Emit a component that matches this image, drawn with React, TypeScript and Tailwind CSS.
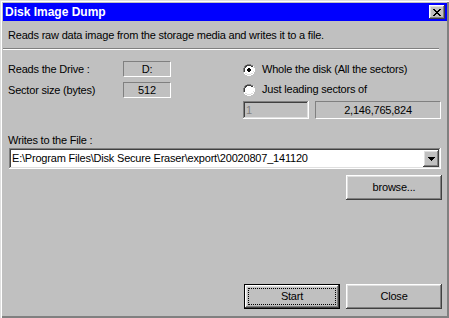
const FONT = "font-['Liberation_Sans',Arial,sans-serif]";

const raised =
  "shadow-[inset_-1px_-1px_#404040,inset_1px_1px_#ffffff,inset_-2px_-2px_#808080,inset_2px_2px_#dfdfdf]";
const sunken =
  "shadow-[inset_-1px_-1px_#ffffff,inset_1px_1px_#808080,inset_-2px_-2px_#dfdfdf,inset_2px_2px_#404040]";
const staticBox = "border border-t-[#808080] border-l-[#808080] border-r-white border-b-white";

function Radio({ checked }: { checked?: boolean }) {
  return (
    <svg width="12" height="12" viewBox="0 0 12 12" className="shrink-0">
      <path d="M4 0h4v1h2v1h1v2h1v4h-1v2h-1v1h-2v1h-4v-1h-2v-1h-1v-2h-1v-4h1v-2h1v-1h2z" fill="#ffffff" />
      <path d="M4 0h4v1h2v1h-2v-1h-4v1h-2v2h-1v4h-1v-4h1v-2h1v-1h2z" fill="#808080" />
      <path d="M4 1h4v1h2v1h-2v-1h-4v1h-1v1h-1v4h-1v-4h1v-2h1v-1h2z" fill="#404040" />
      <path d="M10 3h1v1h-1zM11 4v4h-1v2h-2v1h-4v-1h-2v-1h2v1h4v-1h2v-2h1v-4z" fill="#dfdfdf" />
      {checked && <path d="M5 4h2v1h1v2h-1v1h-2v-1h-1v-2h1z" fill="#000000" />}
    </svg>
  );
}

function Button({ label, primary, className = "" }: { label: string; primary?: boolean; className?: string }) {
  if (primary) {
    return (
      <div className={`border border-black bg-[#c0c0c0] ${className}`}>
        <div className={`h-full w-full p-[3px] ${raised}`}>
          <div className="flex h-full w-full items-center justify-center border border-dotted border-black">
            {label}
          </div>
        </div>
      </div>
    );
  }
  return (
    <div className={`flex items-center justify-center bg-[#c0c0c0] ${raised} ${className}`}>{label}</div>
  );
}

export default function App() {
  return (
    <div
      className={`${FONT} flex h-[318px] w-[449px] flex-col bg-[#c0c0c0] pl-[3px] pr-[2px] pt-[3px] text-[11px] leading-[13px] tracking-[-0.2px] text-black shadow-[inset_1px_1px_#dfdfdf,inset_2px_2px_#ffffff,inset_-2px_-2px_#808080]`}
    >
      {/* title bar */}
      <div className="flex h-[18px] items-center justify-between bg-[#0000ff] pl-[2px] pr-[2px]">
        <span className="text-[12px] font-bold tracking-normal text-white">Disk Image Dump</span>
        <div className={`flex h-[14px] w-[16px] items-center justify-center bg-[#c0c0c0] ${raised}`}>
          <svg width="8" height="7" viewBox="0 0 8 7">
            <path
              d="M0 0h2v1h1v1h2v-1h1v-1h2v1h-1v1h-1v1h-1v1h1v1h1v1h1v1h-2v-1h-1v-1h-2v1h-1v1h-2v-1h1v-1h1v-1h1v-1h-1v-1h-1v-1h-1z"
              fill="#000"
            />
          </svg>
        </div>
      </div>

      <div className="flex flex-1 flex-col">
        <div className="mt-[8px] pl-[5px]">Reads raw data image from the storage media and writes it to a file.</div>
        <div className="mt-[6px] h-[2px] w-[436px] border-t border-b border-t-[#808080] border-b-white" />

        <div className="mt-[11px] flex pl-[5px]">
          {/* left column */}
          <div className="flex w-[235px] flex-col gap-[5px]">
            <div className="flex items-center">
              <span className="w-[115px]">Reads the Drive :</span>
              <div className={`flex h-[16px] w-[48px] items-center justify-center ${staticBox}`}>D:</div>
            </div>
            <div className="flex items-center">
              <span className="w-[115px]">Sector size (bytes)</span>
              <div className={`flex h-[16px] w-[48px] items-center justify-center ${staticBox}`}>512</div>
            </div>
          </div>

          {/* right column */}
          <div className="flex flex-col">
            <div className="mt-[2px] flex h-[13px] items-center gap-[7px]">
              <Radio checked />
              <span>Whole the disk (All the sectors)</span>
            </div>
            <div className="mt-[7px] flex h-[13px] items-center gap-[7px]">
              <Radio />
              <span>Just leading sectors of</span>
            </div>
            <div className="mt-[5px] flex gap-[6px]">
              <div className={`flex h-[18px] w-[66px] items-center px-[3px] text-[#808080] ${sunken}`}>1</div>
              <div className={`flex h-[18px] w-[126px] items-center justify-center ${staticBox}`}>2,146,765,824</div>
            </div>
          </div>
        </div>

        <div className="mt-[15px] pl-[5px]">Writes to the File :</div>
        <div className={`ml-[6px] mt-[1px] flex h-[21px] w-[432px] items-center bg-white p-[2px] ${sunken}`}>
          <span className="flex-1 pl-[1px]">E:\Program Files\Disk Secure Eraser\export\20020807_141120</span>
          <div className={`flex h-[17px] w-[16px] items-center justify-center bg-[#c0c0c0] ${raised}`}>
            <svg width="7" height="4" viewBox="0 0 7 4">
              <path d="M0 0h7v1h-1v1h-1v1h-1v1h-1v-1h-1v-1h-1v-1h-1z" fill="#000" />
            </svg>
          </div>
        </div>

        <div className="mt-[6px] flex justify-end pr-[5px]">
          <Button label="browse..." className="h-[25px] w-[96px]" />
        </div>

        <div className="mt-auto mb-[9px] flex justify-end gap-[6px] pr-[5px]">
          <Button label="Start" primary className="h-[25px] w-[96px]" />
          <Button label="Close" className="h-[25px] w-[96px]" />
        </div>
      </div>
    </div>
  );
}
